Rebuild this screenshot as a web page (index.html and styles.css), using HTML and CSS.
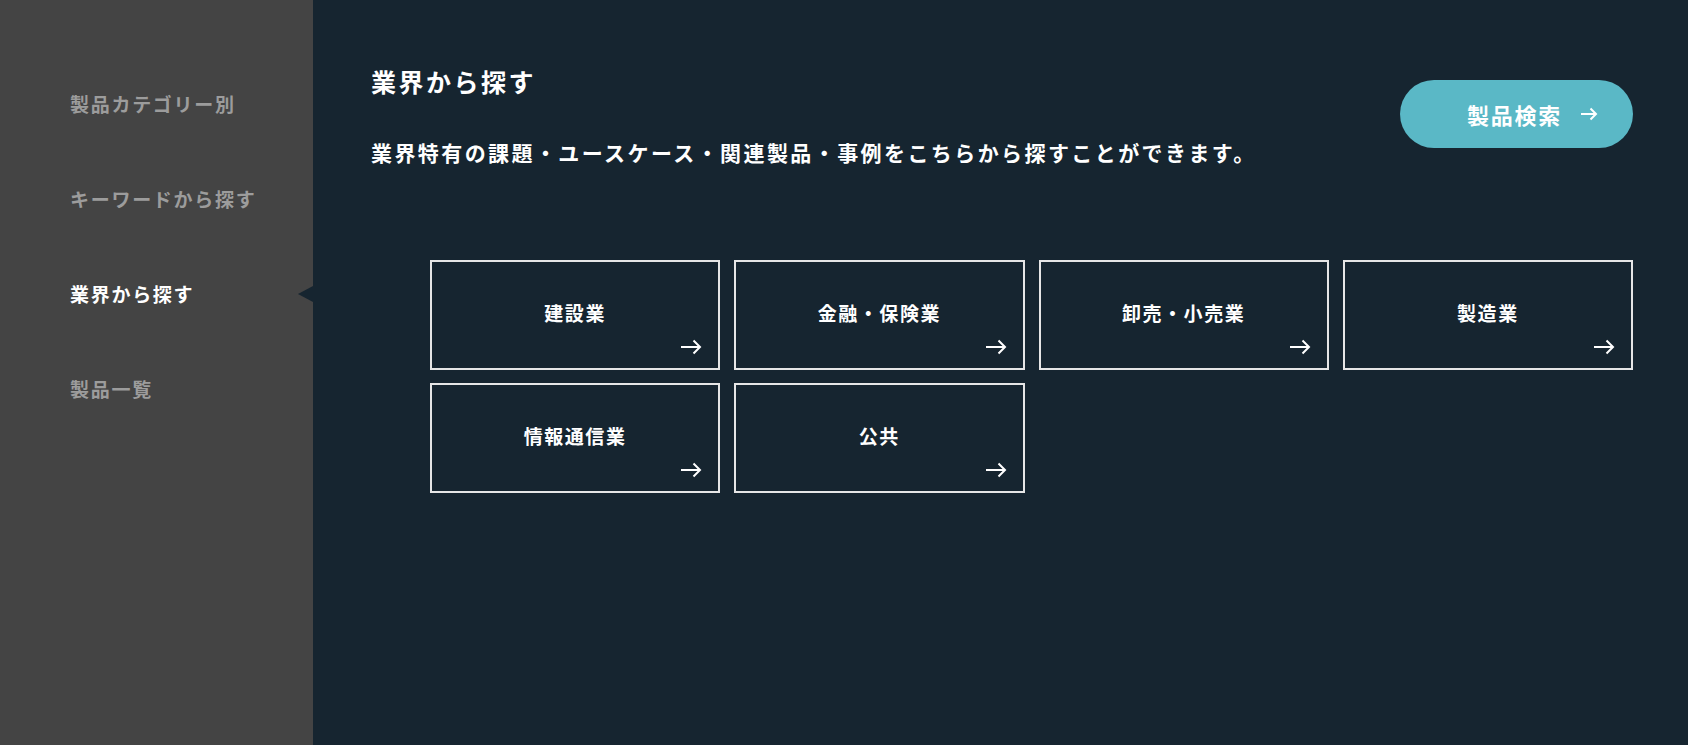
FILE: index.html
```html
<!DOCTYPE html>
<html lang="ja">
<head>
    <meta charset="UTF-8">
    <meta name="viewport" content="width=device-width, initial-scale=1.0">
    <title>業界から探す</title>
    <link rel="stylesheet" href="styles.css">
</head>
<body>

<nav class="side">
    <a class="side-item" href="#">製品カテゴリー別</a>
    <a class="side-item" href="#">キーワードから探す</a>
    <a class="side-item active" href="#">業界から探す</a>
    <a class="side-item" href="#">製品一覧</a>
</nav>

<main class="main">
    <div class="head">
        <div class="head-text">
            <h2 class="title">業界から探す</h2>
            <p class="lead">業界特有の課題・ユースケース・関連製品・事例をこちらから探すことができます。</p>
        </div>
        <a class="search-btn" href="#">
            <span>製品検索</span>
            <svg width="18" height="14" viewBox="0 0 18 14"><path d="M1 7h15M10.5 1.5L16 7l-5.5 5.5" fill="none" stroke="#fff" stroke-width="2"/></svg>
        </a>
    </div>

    <div class="cards">
        <a class="card" href="#"><span class="card-name">建設業</span><svg class="card-arrow" width="22" height="16" viewBox="0 0 22 16"><path d="M1 8h19M13.5 1.5L20 8l-6.5 6.5" fill="none" stroke="#fff" stroke-width="2"/></svg></a>
        <a class="card" href="#"><span class="card-name">金融・保険業</span><svg class="card-arrow" width="22" height="16" viewBox="0 0 22 16"><path d="M1 8h19M13.5 1.5L20 8l-6.5 6.5" fill="none" stroke="#fff" stroke-width="2"/></svg></a>
        <a class="card" href="#"><span class="card-name">卸売・小売業</span><svg class="card-arrow" width="22" height="16" viewBox="0 0 22 16"><path d="M1 8h19M13.5 1.5L20 8l-6.5 6.5" fill="none" stroke="#fff" stroke-width="2"/></svg></a>
        <a class="card" href="#"><span class="card-name">製造業</span><svg class="card-arrow" width="22" height="16" viewBox="0 0 22 16"><path d="M1 8h19M13.5 1.5L20 8l-6.5 6.5" fill="none" stroke="#fff" stroke-width="2"/></svg></a>
        <a class="card" href="#"><span class="card-name">情報通信業</span><svg class="card-arrow" width="22" height="16" viewBox="0 0 22 16"><path d="M1 8h19M13.5 1.5L20 8l-6.5 6.5" fill="none" stroke="#fff" stroke-width="2"/></svg></a>
        <a class="card" href="#"><span class="card-name">公共</span><svg class="card-arrow" width="22" height="16" viewBox="0 0 22 16"><path d="M1 8h19M13.5 1.5L20 8l-6.5 6.5" fill="none" stroke="#fff" stroke-width="2"/></svg></a>
    </div>
</main>

</body>
</html>
```

FILE: styles.css
```css
body { margin: 0; height: 100vh; display: flex; font-family: "Noto Sans CJK JP", sans-serif; background: #162530; color: #fff; overflow: hidden; }
a { text-decoration: none; color: inherit; }

.side { width: 313px; flex-shrink: 0; background: #444; display: flex; flex-direction: column; gap: 71px; padding-top: 92px; box-sizing: border-box; }
.side-item { position: relative; display: block; padding-left: 70px; font-size: 19px; line-height: 24px; font-weight: 700; letter-spacing: 0.09em; color: #9c9c9c; }
.side-item.active { color: #fff; }
.side-item.active::after { content: ""; position: absolute; right: 0; top: 50%; transform: translateY(-50%); border-style: solid; border-width: 8px 15px 8px 0; border-color: transparent #162530 transparent transparent; }

.main { flex: 1; padding: 65px 55px 0 58px; }
.head { display: flex; justify-content: space-between; align-items: flex-start; }
.title { margin: 0; font-size: 25px; line-height: 32px; font-weight: 700; letter-spacing: 0.1em; }
.lead { margin: 40px 0 0; font-size: 21px; line-height: 30px; font-weight: 700; letter-spacing: 0.115em; }

.search-btn { margin-top: 15px; display: inline-flex; align-items: center; gap: 18px; height: 68px; padding: 0 35px 0 67px; border-radius: 34px; background: #5ab8c6; font-size: 22px; font-weight: 700; letter-spacing: 0.08em; }
.search-btn svg { display: block; }

.cards { margin: 93px 0 0 59px; display: grid; grid-template-columns: repeat(4, 1fr); gap: 13px 14px; }
.card { display: grid; height: 110px; box-sizing: border-box; border: 2px solid #e6e6e6; }
.card-name { grid-area: 1 / 1; align-self: center; justify-self: center; margin-bottom: 5px; font-size: 19px; font-weight: 700; letter-spacing: 0.08em; }
.card-arrow { grid-area: 1 / 1; align-self: end; justify-self: end; margin: 0 16px 13px 0; }
```
